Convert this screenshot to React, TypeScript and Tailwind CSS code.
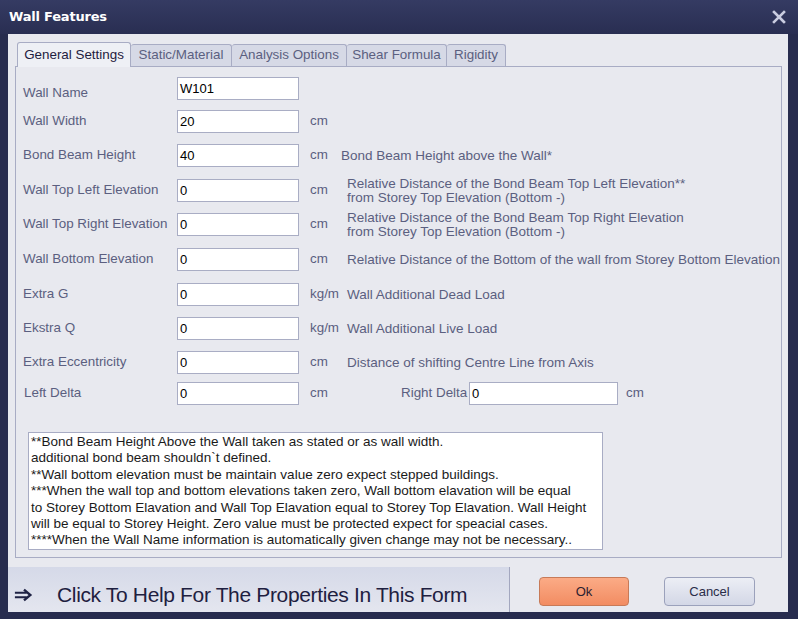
import React from "react"

const rows = [
  { label: "Wall Name", value: "W101", unit: "", desc: [], mt: "mt-[10px]", lab: "pt-[10px]" },
  { label: "Wall Width", value: "20", unit: "cm", desc: [], mt: "mt-[10px]", lab: "" },
  { label: "Bond Beam Height", value: "40", unit: "cm", desc: ["Bond Beam Height above the Wall*"], mt: "mt-[11px]", lab: "" },
  {
    label: "Wall Top Left Elevation",
    value: "0",
    unit: "cm",
    desc: ["Relative Distance of the Bond Beam Top Left Elevation**", "from Storey Top Elevation (Bottom -)"],
    mt: "mt-[12px]",
    lab: "",
  },
  {
    label: "Wall Top Right Elevation",
    value: "0",
    unit: "cm",
    desc: ["Relative Distance of the Bond Beam Top Right Elevation", "from Storey Top Elevation (Bottom -)"],
    mt: "mt-[11px]",
    lab: "",
  },
  {
    label: "Wall Bottom Elevation",
    value: "0",
    unit: "cm",
    desc: ["Relative Distance of the Bottom of the wall from Storey Bottom Elevation"],
    mt: "mt-[12px]",
    lab: "",
  },
  { label: "Extra G", value: "0", unit: "kg/m", desc: ["Wall Additional Dead Load"], mt: "mt-[12px]", lab: "" },
  { label: "Ekstra Q", value: "0", unit: "kg/m", desc: ["Wall Additional Live Load"], mt: "mt-[11px]", lab: "" },
  { label: "Extra Eccentricity", value: "0", unit: "cm", desc: ["Distance of shifting Centre Line from Axis"], mt: "mt-[11px]", lab: "" },
]

const tabs = [
  { name: "General Settings", w: "w-[114px]" },
  { name: "Static/Material", w: "w-[101px]" },
  { name: "Analysis Options", w: "w-[115px]" },
  { name: "Shear Formula", w: "w-[100px]" },
  { name: "Rigidity", w: "w-[59px]" },
]

const notes = [
  "**Bond Beam Height Above the Wall taken as stated or as wall width.",
  "additional bond beam shouldn`t defined.",
  "**Wall bottom elevation must be maintain value zero expect stepped buildings.",
  "***When the wall top and bottom elevations taken zero, Wall bottom elavation will be equal",
  "to Storey Bottom Elavation and Wall Top Elavation equal to Storey Top Elavation. Wall Height",
  "will be equal to Storey Height. Zero value must be protected expect for speacial cases.",
  "****When the Wall Name information is automatically given change may not be necessary..",
]

function Field({ value, width }: { value: string; width: string }) {
  return (
    <div className={`${width} h-[23px] shrink-0 bg-white border border-[#a9adc4] px-[2px] flex items-center text-[13px] text-black`}>
      {value}
    </div>
  )
}

export default function App() {
  return (
    <div className="w-[798px] h-[619px] bg-[#272c4e] flex flex-col font-['Liberation_Sans',Arial,sans-serif] overflow-hidden">
      {/* Title bar */}
      <div className="h-[34px] shrink-0 flex items-center justify-between pl-[9px] pr-[12px] bg-gradient-to-b from-[#353b63] to-[#292e52]">
        <span className="text-white font-bold text-[13px] font-['DejaVu_Sans',sans-serif] tracking-[-0.2px]">Wall Features</span>
        <svg width="14" height="14" viewBox="0 0 14 14">
          <path d="M2 2 L12 12 M12 2 L2 12" stroke="#c9cce0" strokeWidth="2.6" strokeLinecap="square" />
        </svg>
      </div>

      <div className="flex-1 ml-[8px] mr-[10px] mb-[7px] bg-[#e8e9ef] flex flex-col">
        {/* Tabs */}
        <div className="flex pl-[9px] pt-[7px] h-[32px] shrink-0 items-end">
          {tabs.map((t, i) => (
            <div
              key={t.name}
              className={
                i === 0
                  ? `${t.w} h-[25px] flex items-center justify-center border border-b-0 border-[#a8acc4] rounded-t-[3px] bg-[#eef0f5] text-[13.4px] text-[#1e2040] relative top-[1px] z-10`
                  : `${t.w} h-[22px] flex items-center justify-center border border-b-0 border-l-0 border-[#a8acc4] rounded-t-[3px] bg-[#d6d9e6] text-[13.4px] text-[#5b5f80]`
              }
            >
              {t.name}
            </div>
          ))}
        </div>

        {/* Tab page */}
        <div className="ml-[7px] mr-[6px] h-[492px] shrink-0 border border-[#a8acc4] bg-[#e8e9ef] flex flex-col overflow-hidden">
          {rows.map((r) => (
            <div key={r.label} className={`flex items-center h-[23px] shrink-0 ${r.mt}`}>
              <div className={`w-[161px] shrink-0 pl-[7px] text-[13.4px] text-[#5b5f80] ${r.lab}`}>{r.label}</div>
              <Field value={r.value} width="w-[122px]" />
              <div className="w-[48px] shrink-0 pl-[11px] text-[13.4px] text-[#5b5f80]">{r.unit}</div>
              {r.desc.length > 0 && (
                <div
                  className={`text-[13.5px] text-[#5b5f80] leading-[13.5px] whitespace-nowrap ${r.label === "Bond Beam Height" ? "-ml-[6px]" : ""}`}
                >
                  {r.desc.map((d) => (
                    <div key={d}>{d}</div>
                  ))}
                </div>
              )}
            </div>
          ))}

          {/* Left / Right delta */}
          <div className="flex items-center h-[23px] shrink-0 mt-[8px]">
            <div className="w-[161px] shrink-0 pl-[8px] text-[13.4px] text-[#5b5f80]">Left Delta</div>
            <Field value="0" width="w-[122px]" />
            <div className="w-[102px] shrink-0 pl-[11px] text-[13.4px] text-[#5b5f80]">cm</div>
            <div className="w-[68px] shrink-0 text-[13.4px] text-[#5b5f80] whitespace-nowrap">Right Delta</div>
            <Field value="0" width="w-[149px]" />
            <div className="pl-[8px] text-[13.4px] text-[#5b5f80]">cm</div>
          </div>

          {/* Notes */}
          <div className="ml-[12px] mt-[27px] w-[575px] h-[118px] shrink-0 bg-white border border-[#a8acc4] px-[2px] pt-[1px] text-[13.5px] leading-[16.4px] text-[#1a1a1a] whitespace-nowrap overflow-hidden">
            {notes.map((n) => (
              <div key={n}>{n}</div>
            ))}
          </div>
        </div>

        {/* Bottom bar */}
        <div className="flex mt-[9px] h-[45px] shrink-0">
          <div className="w-[502px] shrink-0 border-r border-[#a3a7bf] bg-gradient-to-b from-[#d5d9e8] to-[#e4e6ef] flex items-end pb-[4px] pl-[6px]">
            <svg width="20" height="16" viewBox="0 0 22 16" className="mb-[5px]">
              <path d="M1 5.5 H14 M1 10.5 H14" stroke="#1e2244" strokeWidth="2.4" />
              <path d="M11 2 L18 8 L11 14" fill="none" stroke="#1e2244" strokeWidth="2.6" strokeLinejoin="miter" />
            </svg>
            <span className="ml-[23px] text-[21px] leading-[26px] tracking-[-0.35px] text-[#1e2040]">
              Click To Help For The Properties In This Form
            </span>
          </div>
          <div className="flex-1 flex items-center pt-[4px] pl-[29px] gap-[35px]">
            <button className="w-[90px] h-[29px] rounded-[4px] border border-[#c77a58] bg-gradient-to-b from-[#fbab86] to-[#f28c62] text-[13px] text-[#2a2030]">
              Ok
            </button>
            <button className="w-[91px] h-[29px] rounded-[4px] border border-[#9ba1bb] bg-gradient-to-b from-[#eceef5] to-[#d3d7e6] text-[13px] text-[#2a2d48]">
              Cancel
            </button>
          </div>
        </div>
      </div>
    </div>
  )
}
